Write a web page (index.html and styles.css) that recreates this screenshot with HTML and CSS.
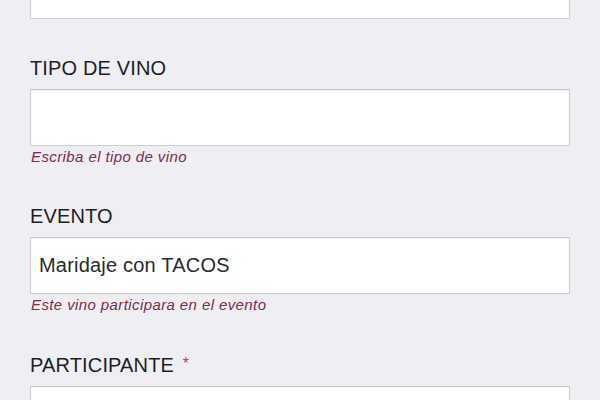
FILE: index.html
```html
<!DOCTYPE html>
<html lang="es">
<head>
<meta charset="utf-8">
<title>Vino</title>
<link rel="stylesheet" href="styles.css">
</head>
<body>
<form class="form">
  <div class="field field-first">
    <input class="input" type="text">
  </div>
  <div class="field has-help">
    <label class="label">TIPO DE VINO</label>
    <input class="input" type="text">
    <p class="help">Escriba el tipo de vino</p>
  </div>
  <div class="field has-help">
    <label class="label">EVENTO</label>
    <input class="input" type="text" value="Maridaje con TACOS">
    <p class="help">Este vino participara en el evento</p>
  </div>
  <div class="field">
    <label class="label">PARTICIPANTE <span class="req">*</span></label>
    <input class="input" type="text">
  </div>
</form>
</body>
</html>
```
FILE: styles.css
```css
html, body {
  margin: 0;
  padding: 0;
  background: #efeef3;
  font-family: "Liberation Sans", Arial, sans-serif;
  overflow: hidden;
}
.form {
  display: flex;
  flex-direction: column;
  padding-left: 30px;
  width: 540px;
}
.field {
  display: flex;
  flex-direction: column;
  margin-bottom: 38px;
}
.field.has-help {
  margin-bottom: 39px;
}
.field-first {
  margin-top: -38px;
}
.label {
  font-size: 20px;
  line-height: 22px;
  letter-spacing: 0.15px;
  color: #1e1e1e;
  margin-bottom: 10px;
}
.req {
  color: #e0323c;
  font-size: 16px;
  margin-left: 3px;
  vertical-align: 3px;
}
.input {
  box-sizing: border-box;
  height: 57px;
  width: 540px;
  margin: 0;
  border: 1px solid #cdcdcd;
  border-top-color: #c6c6c6;
  background: #fff;
  box-shadow: inset 0 1px 1px rgba(0,0,0,0.04);
  padding: 0 8px;
  font-family: "Liberation Sans", Arial, sans-serif;
  font-size: 20px;
  letter-spacing: 0.2px;
  color: #2a2a2a;
  outline: none;
}
.help {
  margin: 2px 0 0 1px;
  font-size: 15px;
  line-height: 18px;
  letter-spacing: 0.4px;
  font-style: italic;
  color: #7b2c4c;
}
```
